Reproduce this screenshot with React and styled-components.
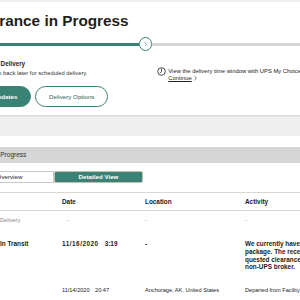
import React from "react";
import styled, { createGlobalStyle } from "styled-components";

const TEAL = "#3a8276";
const FONT = '"Liberation Sans", Arial, sans-serif';

const Global = createGlobalStyle`
  html, body { margin: 0; padding: 0; }
  body {
    background: #efefef;
    overflow: hidden;
    width: 300px;
    height: 300px;
    font-family: ${FONT};
    color: #1c1c1c;
  }
`;

const Page = styled.div`
  margin-left: -33px;
  width: 560px;
  padding-top: 2px;
`;

const TopCard = styled.section`
  background: #fff;
  padding: 9.5px 0 8px;
  box-shadow: 0 1px 2px rgba(0, 0, 0, 0.12);
`;

const Title = styled.h1`
  margin: 0;
  font-size: 15.3px;
  line-height: 18px;
  font-weight: 700;
  color: #1f1f1f;
`;

const Track = styled.div`
  display: flex;
  align-items: center;
  margin-top: 8px;
  height: 13px;
`;

const Segment = styled.div`
  height: 3px;
  background: ${(p) => (p.$done ? TEAL : "#d6d6d6")};
  width: ${(p) => (p.$done ? "172px" : "auto")};
  flex: ${(p) => (p.$done ? "none" : "1")};
`;

const Node = styled.div`
  box-sizing: border-box;
  width: 13.4px;
  height: 13.4px;
  border-radius: 50%;
  border: 1.5px solid ${TEAL};
  background: #fff;
  display: flex;
  align-items: center;
  justify-content: center;
`;

const InfoRow = styled.div`
  display: grid;
  grid-template-columns: 190px 1fr;
  margin-top: 9.4px;
`;

const LeftCol = styled.div`
  display: flex;
  flex-direction: column;
`;

const Label = styled.div`
  font-size: 6.3px;
  line-height: 8px;
  font-weight: 700;
  color: #1c1c1c;
`;

const Note = styled.div`
  font-size: 5.8px;
  line-height: 8px;
  color: #333;
  margin-top: 1.6px;
`;

const Buttons = styled.div`
  display: flex;
  gap: 3.6px;
  margin-top: 8.5px;
`;

const Pill = styled.button`
  box-sizing: border-box;
  height: 21px;
  padding: 0 13px;
  border-radius: 11px;
  font-family: ${FONT};
  font-size: 6.2px;
  font-weight: ${(p) => (p.$primary ? 700 : 400)};
  background: ${(p) => (p.$primary ? TEAL : "#fff")};
  color: ${(p) => (p.$primary ? "#fff" : "#2f5f58")};
  border: 1px solid ${TEAL};
  white-space: nowrap;
`;

const RightCol = styled.div`
  display: flex;
  align-items: flex-start;
  gap: 2.3px;
  padding-top: 8px;
`;

const InfoText = styled.div`
  font-size: 5.85px;
  line-height: 7px;
  color: #222;
  white-space: nowrap;
`;

const Link = styled.span`
  display: inline-flex;
  align-items: center;
  gap: 2.3px;
  & > span { text-decoration: underline; }
`;

const Gap = styled.div`
  height: 21px;
`;

const SecondCard = styled.section`
  background: #fff;
  padding-top: 11px;
  min-height: 200px;
`;

const SectionBar = styled.div`
  background: #d6d6d6;
  height: 16px;
  line-height: 16px;
  padding-left: 4px;
  font-size: 6.5px;
  color: #333;
`;

const Toggle = styled.div`
  display: flex;
  margin-top: 7.7px;
  margin-left: -2px;
`;

const Tab = styled.div`
  box-sizing: border-box;
  width: 89px;
  height: 12.6px;
  display: flex;
  align-items: center;
  justify-content: center;
  font-size: 6.2px;
  font-weight: ${(p) => (p.$active ? 700 : 400)};
  color: ${(p) => (p.$active ? "#fff" : "#222")};
  background: ${(p) => (p.$active ? TEAL : "#fff")};
  border: 1px solid ${(p) => (p.$active ? "#c9bda8" : "#c8c8c8")};
  border-radius: ${(p) => (p.$active ? "2px" : "0")};
`;

const Table = styled.div`
  margin-top: 9px;
  border-top: 1px solid #dcd8cf;
`;

const Row = styled.div`
  display: grid;
  grid-template-columns: 33px 62px 83px 100px 160px;
  font-size: ${(p) => (p.$bold ? "6.4px" : "5.6px")};
  font-weight: ${(p) => (p.$bold ? 700 : 400)};
  color: ${(p) => (p.$muted ? "#888" : "#1c1c1c")};
  line-height: 7.6px;
  padding: ${(p) => p.$pad || "8px 0"};
  border-bottom: ${(p) => (p.$head ? "1px solid #dcd8cf" : "none")};
  white-space: nowrap;
`;

const Cell = styled.div`
  padding-left: ${(p) => p.$indent || 0};
`;

const DateText = styled.span`
  letter-spacing: ${(p) => p.$track || 0};
`;

const Spaced = styled.span`
  margin-left: ${(p) => p.$gap || "4px"};
`;

const Chevron = ({ size = 4, color = TEAL, w = 1 }) => (
  <svg width={size} height={size * 1.4} viewBox="0 0 4 6" fill="none">
    <path d="M1 0.8 L3.2 3 L1 5.2" stroke={color} strokeWidth={w} strokeLinecap="round" strokeLinejoin="round" />
  </svg>
);

const Clock = () => (
  <svg width="9" height="9" viewBox="0 0 9 9" fill="none" style={{ marginTop: "-0.5px" }}>
    <circle cx="4.5" cy="4.5" r="3.8" stroke="#222" strokeWidth="0.8" />
    <path d="M4.5 2 L4.5 4.5 L3.4 5.8" stroke="#222" strokeWidth="0.8" strokeLinecap="round" />
  </svg>
);

export default function App() {
  return (
    <>
      <Global />
      <Page>
        <TopCard>
          <Title>Clearance in Progress</Title>
          <Track>
            <Segment $done />
            <Node>
              <Chevron size={3.4} w={0.9} />
            </Node>
            <Segment />
          </Track>
          <InfoRow>
            <LeftCol>
              <Label>Scheduled Delivery</Label>
              <Note>Please check back later for scheduled delivery.</Note>
              <Buttons>
                <Pill $primary>Get Updates</Pill>
                <Pill>Delivery Options</Pill>
              </Buttons>
            </LeftCol>
            <RightCol>
              <Clock />
              <InfoText>
                View the delivery time window with UPS My Choice
                <br />
                <Link>
                  <span>Continue</span>
                  <Chevron size={3.2} color="#222" w={0.9} />
                </Link>
              </InfoText>
            </RightCol>
          </InfoRow>
        </TopCard>
        <Gap />
        <SecondCard>
          <SectionBar>Shipment Progress</SectionBar>
          <Toggle>
            <Tab>Overview</Tab>
            <Tab $active>Detailed View</Tab>
          </Toggle>
          <Table>
            <Row $head $bold $pad="5px 0 4px">
              <Cell />
              <Cell />
              <Cell>Date</Cell>
              <Cell>Location</Cell>
              <Cell>Activity</Cell>
            </Row>
            <Row $muted $pad="6px 0 8px">
              <Cell />
              <Cell>Delivery</Cell>
              <Cell $indent="5px">-</Cell>
              <Cell>-</Cell>
              <Cell>-</Cell>
            </Row>
            <Row $bold>
              <Cell />
              <Cell>In Transit</Cell>
              <Cell>
                <DateText $track="0.5px">11/16/2020</DateText>
                <Spaced $gap="6px">3:19</Spaced>
              </Cell>
              <Cell>-</Cell>
              <Cell>
                We currently have your
                <br />
                package. The receiver has re-
                <br />
                quested clearance through a
                <br />
                non-UPS broker.
              </Cell>
            </Row>
            <Row>
              <Cell />
              <Cell />
              <Cell>
                <DateText>11/14/2020</DateText>
                <Spaced $gap="5.5px">20:47</Spaced>
              </Cell>
              <Cell>Anchorage, AK, United States</Cell>
              <Cell>Departed from Facility</Cell>
            </Row>
          </Table>
        </SecondCard>
      </Page>
    </>
  );
}
